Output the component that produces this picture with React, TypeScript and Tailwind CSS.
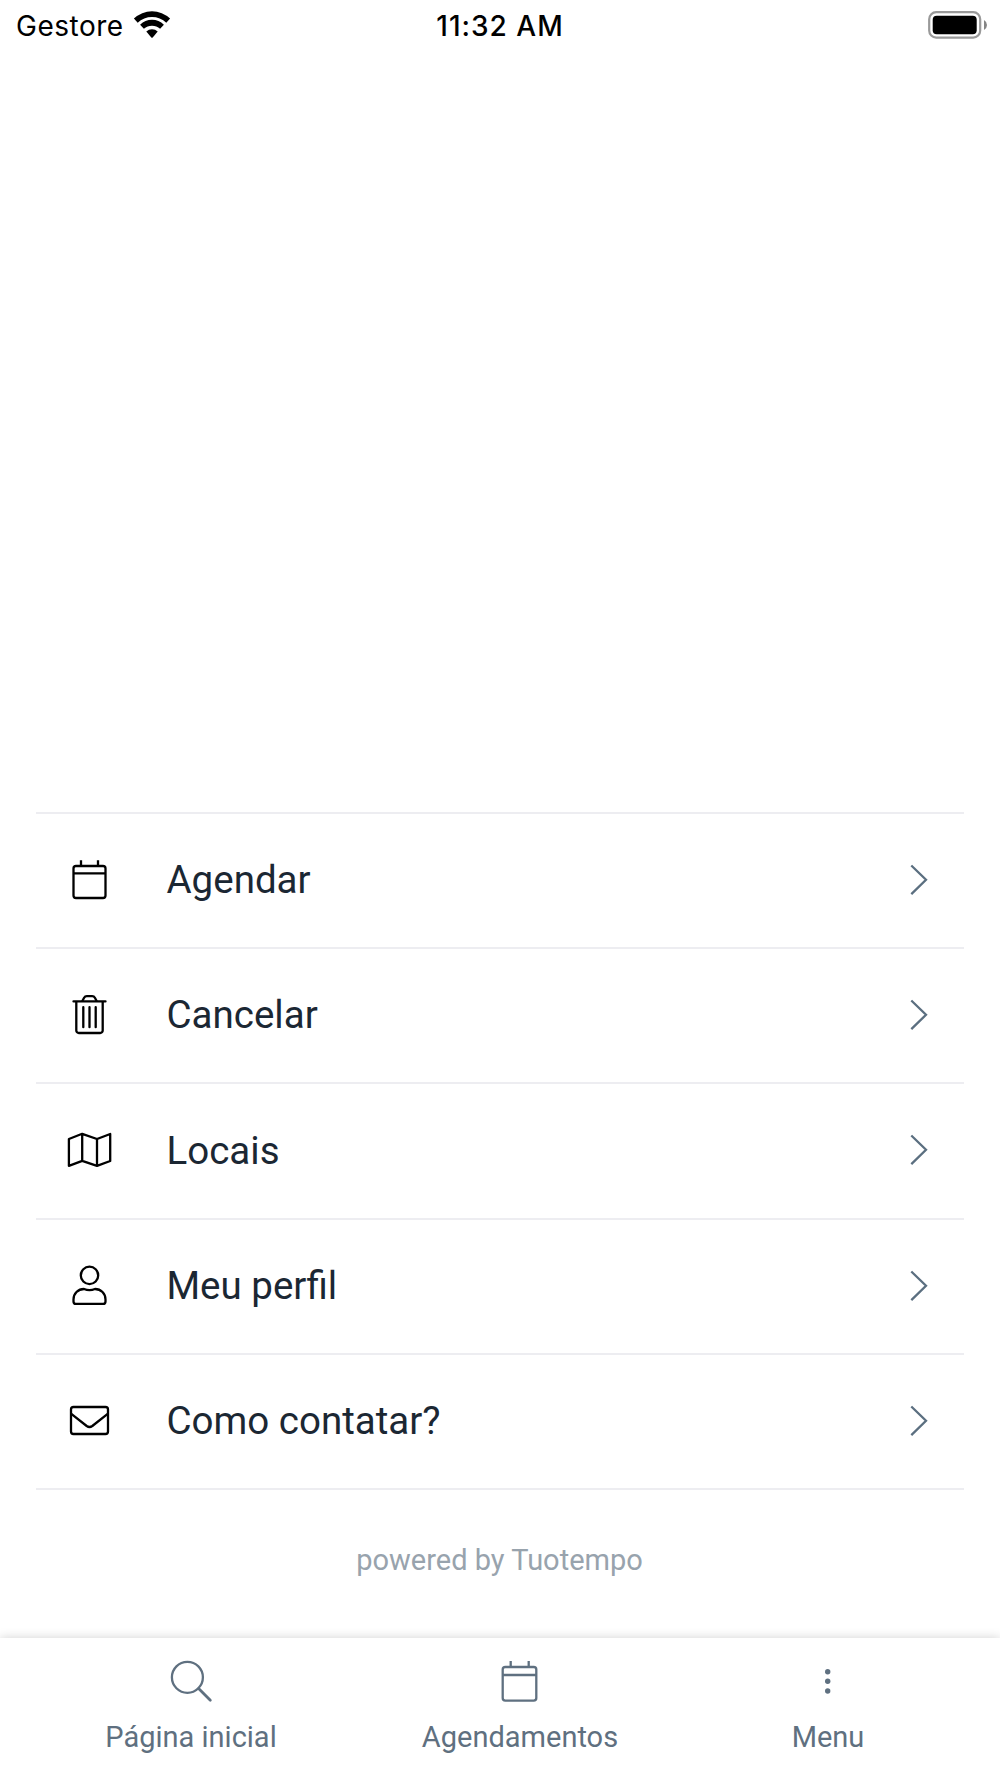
import type { ReactNode } from 'react'

const Icon = ({ children }: { children: ReactNode }) => (
  <svg
    className="w-12 h-12 shrink-0"
    viewBox="0 0 48 48"
    fill="none"
    stroke="currentColor"
    strokeWidth="2.3"
    strokeLinejoin="round"
  >
    {children}
  </svg>
)

const calendarIcon = (
  <Icon>
    <rect x="8.5" y="10" width="32" height="32" rx="2.5" />
    <path d="M8.5 17.4h32M16 4.3V10M33 4.3V10" />
  </Icon>
)

const trashIcon = (
  <Icon>
    <path d="M8.5 10.4h32" strokeLinecap="round" />
    <path d="M11.3 10.4V39.5a2.5 2.5 0 0 0 2.5 2.5h21.4a2.5 2.5 0 0 0 2.5-2.5V10.4" />
    <path d="M17.2 10.2l1.9-3.5q.9-1.6 2.7-1.6h5.4q1.8 0 2.7 1.6l1.9 3.5" />
    <path d="M18.3 16.2v20M24.5 16.2v20M30.7 16.2v20" strokeLinecap="round" />
  </Icon>
)

const mapIcon = (
  <Icon>
    <path d="M3.9 13L17.2 7.8L32 13L45.2 8V35L32 39.8L17.2 34.8L3.9 39.8ZM17.2 7.8V34.8M32 13V39.8" />
  </Icon>
)

const userIcon = (
  <Icon>
    <circle cx="24.5" cy="13.4" r="8.7" />
    <path d="M19 27q5.5 2.4 11 0c6 0 10.5 4.6 10.5 10.5V39.4a2.5 2.5 0 0 1-2.5 2.5H11a2.5 2.5 0 0 1-2.5-2.5V37.5C8.5 31.6 13 27 19 27z" />
  </Icon>
)

const mailIcon = (
  <Icon>
    <rect x="6" y="10" width="37" height="27" rx="2.5" />
    <path d="M6 16.7L21.7 29Q24.5 31 27.3 29L43 16.7" />
  </Icon>
)

const menuItems = [
  { label: 'Agendar', icon: calendarIcon },
  { label: 'Cancelar', icon: trashIcon },
  { label: 'Locais', icon: mapIcon },
  { label: 'Meu perfil', icon: userIcon },
  { label: 'Como contatar?', icon: mailIcon }
]

const StatusBar = () => (
  <header className="h-[50px] grid grid-cols-3 items-center font-['Inter',sans-serif] text-[28px] leading-[50px] text-black">
    <div className="flex items-center pl-4">
      <span className="w-[109px] pt-px text-[28px] tracking-[0.5px]">Gestore</span>
      <svg className="w-[38px] h-7 ml-2 mb-px" viewBox="0 0 38 28" fill="currentColor">
        <path d="M0.9 7.6A26 26 0 0 1 37.1 7.6L33.3 11.7A20.6 20.6 0 0 0 4.7 11.7Z" />
        <path d="M7.1 13.7A17 17 0 0 1 30.9 13.7L27.1 17.8A12 12 0 0 0 10.9 17.8Z" />
        <path d="M13.3 20.4A8.500 8.500 0 0 1 24.7 20.4L19.7 26.4Q19 27 18.3 26.4Z" />
      </svg>
    </div>
    <div className="pt-px text-center font-medium tracking-[1px] whitespace-nowrap">11:32 AM</div>
    <div className="flex justify-end pr-3">
      <svg className="w-[60px] h-7 mb-px" viewBox="0 0 60 28">
        <rect x="1.2" y="1.2" width="51" height="25.4" rx="7" fill="none" stroke="#999" strokeWidth="2.2" />
        <rect x="4.7" y="4.8" width="44" height="18.4" rx="4" fill="#000" />
        <path d="M56 9q3 1.8 3 5t-3 5z" fill="#858585" />
      </svg>
    </div>
  </header>
)

const App = () => {
  return (
    <div className="w-[1000px] h-[1778px] flex flex-col bg-white overflow-hidden font-['Roboto',sans-serif]">
      <StatusBar />
      <main className="flex-1 flex flex-col justify-end">
        <ul className="mx-9 border-b-2 border-[#ededf1]">
          {menuItems.map((item) => (
            <li
              className="h-[135.25px] pl-[29px] pr-[26px] border-t-2 border-[#ededf1] flex items-center"
              key={item.label}
            >
              <span className="mb-px text-black">{item.icon}</span>
              <span className="flex-1 ml-[53.5px] mb-px text-[38.5px] text-[#1b2733]">{item.label}</span>
              <svg
                className="w-9 h-9 mb-px text-[#5b6f80]"
                viewBox="0 0 36 36"
                fill="none"
                stroke="currentColor"
                strokeWidth="2.3"
              >
                <path d="M9.3 3.5L24 17.8L9.3 32.1" />
              </svg>
            </li>
          ))}
        </ul>
        <p className="h-[148px] pt-[50px] pr-px text-center text-[29px] leading-[40px] text-[#98a3ad]">
          powered by Tuotempo
        </p>
      </main>
      <nav className="h-[140px] pt-5 flex bg-white text-[#5f7080] text-[29px] leading-[40px] shadow-[0_0_10px_rgba(0,0,0,0.18)]">
        <div className="w-[382px] flex flex-col items-center">
          <Icon>
            <circle cx="20.4" cy="19.3" r="15.5" />
            <path d="M31.6 30.6L43.3 42.3" strokeWidth="2.8" strokeLinecap="round" />
          </Icon>
          <span className="mt-[11px]">Página inicial</span>
        </div>
        <div className="w-[276px] flex flex-col items-center">
          <Icon>
            <rect x="6.7" y="9" width="33.6" height="33.7" rx="2.6" />
            <path d="M6.7 17h33.6M14.7 3v6M32.7 3v6" />
          </Icon>
          <span className="mt-[11px]">Agendamentos</span>
        </div>
        <div className="w-[340px] flex flex-col items-center">
          <svg className="w-12 h-12" viewBox="0 0 48 48" fill="currentColor">
            <circle cx="23.7" cy="13.7" r="2.7" />
            <circle cx="23.7" cy="23.3" r="2.7" />
            <circle cx="23.7" cy="33" r="2.7" />
          </svg>
          <span className="mt-[11px]">Menu</span>
        </div>
      </nav>
    </div>
  )
}

export default App
